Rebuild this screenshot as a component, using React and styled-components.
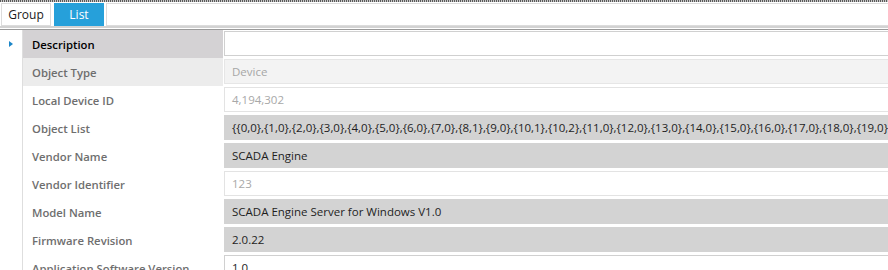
import styled, { createGlobalStyle } from "styled-components";

const GlobalStyle = createGlobalStyle`
  html, body {
    margin: 0;
    padding: 0;
    background: #ffffff;
    overflow: hidden;
  }
  body {
    width: 888px;
    height: 270px;
    font-family: "Open Sans", "Noto Sans", sans-serif;
    font-size: 12px;
  }
`;

const rows = [
  { label: "Description", value: "", kind: "edit", selected: true },
  { label: "Object Type", value: "Device", kind: "readonly" },
  { label: "Local Device ID", value: "4,194,302", kind: "disabled" },
  {
    label: "Object List",
    value:
      "{{0,0},{1,0},{2,0},{3,0},{4,0},{5,0},{6,0},{7,0},{8,1},{9,0},{10,1},{10,2},{11,0},{12,0},{13,0},{14,0},{15,0},{16,0},{17,0},{18,0},{19,0},{20,0},{21,0},{22,0}}",
    kind: "combo",
  },
  { label: "Vendor Name", value: "SCADA Engine", kind: "combo" },
  { label: "Vendor Identifier", value: "123", kind: "disabled" },
  { label: "Model Name", value: "SCADA Engine Server for Windows V1.0", kind: "combo" },
  { label: "Firmware Revision", value: "2.0.22", kind: "combo" },
  { label: "Application Software Version", value: "1.0", kind: "edit" },
];

function App() {
  return (
    <>
      <GlobalStyle />
      <Page>
        <DottedRule />
        <TabStrip>
          <Tab>Group</Tab>
          <Tab $active>List</Tab>
          <TabFiller />
        </TabStrip>
        <HeaderRule />
        <Grid>
          {rows.map((row) => (
            <Row key={row.label}>
              <Gutter>{row.selected && <Caret />}</Gutter>
              <Label $selected={row.selected} $readonly={row.kind === "readonly"}>
                {row.label}
              </Label>
              <ValueCell>
                <ValueBox $kind={row.kind}>{row.value}</ValueBox>
              </ValueCell>
            </Row>
          ))}
        </Grid>
      </Page>
    </>
  );
}

const Page = styled.div`
  width: 888px;
  height: 270px;
  overflow: hidden;
`;

const DottedRule = styled.div`
  height: 2px;
  background: repeating-linear-gradient(90deg, #5a5a5a 0 1px, #c8c8c8 1px 2px);
  margin-bottom: 1px;
`;

const TabStrip = styled.div`
  display: flex;
  height: 23px;
  padding-left: 1px;
  gap: 3px;
`;

const Tab = styled.div`
  width: 50px;
  box-sizing: border-box;
  display: flex;
  align-items: center;
  justify-content: center;
  font-size: 12px;
  color: ${(p) => (p.$active ? "#ffffff" : "#1a1a1a")};
  background: ${(p) => (p.$active ? "#26a0da" : "#ffffff")};
  border: 1px solid ${(p) => (p.$active ? "#26a0da" : "#dcdcdc")};
`;

const TabFiller = styled.div`
  flex: 1;
  border: 1px solid #dcdcdc;
  border-right: none;
  margin-left: -1px;
`;

const HeaderRule = styled.div`
  height: 2px;
  background: #d2d2d2;
  border-bottom: 1px solid #ffffff;
  box-shadow: 0 1px 0 #9a9a9a;
  margin-bottom: 1px;
`;

const Grid = styled.div`
  display: flex;
  flex-direction: column;
`;

const Row = styled.div`
  display: grid;
  grid-template-columns: 23px 200px 1fr;
  height: 28px;
`;

const Gutter = styled.div`
  border-right: 1px solid #dedede;
  display: flex;
  align-items: center;
  padding-left: 9px;
`;

const Caret = styled.span`
  width: 0;
  height: 0;
  border-top: 3px solid transparent;
  border-bottom: 3px solid transparent;
  border-left: 4px solid #1c86c8;
`;

const Label = styled.div`
  display: flex;
  align-items: center;
  padding-left: 9px;
  font-weight: 600;
  font-size: 11.3px;
  white-space: nowrap;
  color: ${(p) => (p.$selected ? "#000000" : "#6e6e6e")};
  background: ${(p) => (p.$selected ? "#d4d2d4" : p.$readonly ? "#ececec" : "#ffffff")};
`;

const ValueCell = styled.div`
  padding: 1px 0 2px 1px;
  margin-right: -6px;
  overflow: hidden;
`;

const boxStyles = {
  edit: "background: #ffffff; border: 1px solid #d0d0d0; color: #1e1e1e;",
  readonly: "background: #f3f3f3; border: 1px solid #e6e6e6; color: #a6a6a6;",
  disabled: "background: #ffffff; border: 1px solid #e3e3e3; color: #a8a8a8;",
  combo: "background: #d3d3d3; border: 1px solid #d3d3d3; color: #1e1e1e;",
};

const ValueBox = styled.div`
  box-sizing: border-box;
  height: 100%;
  display: flex;
  align-items: center;
  padding-left: 7px;
  font-size: 11.5px;
  white-space: nowrap;
  overflow: hidden;
  ${(p) => boxStyles[p.$kind]}
`;

export default App;
